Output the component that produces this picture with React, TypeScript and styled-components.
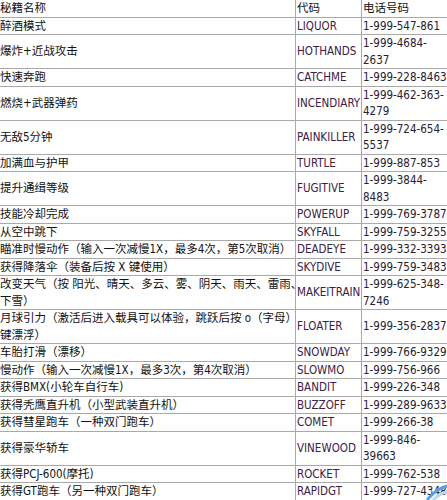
import React from 'react'
import styled, { createGlobalStyle } from 'styled-components'

const GlobalStyle = createGlobalStyle`
  html, body {
    margin: 0;
    padding: 0;
    background: #ffffff;
  }
`

const Page = styled.div`
  position: relative;
  width: 447px;
  height: 500px;
  overflow: hidden;
  background: #ffffff;
`

const Table = styled.table`
  margin-left: -2px;
  margin-top: -1px;
  border-collapse: collapse;
  table-layout: fixed;
  width: 470px;
  font-family: 'DejaVu Sans Condensed', 'DejaVu Sans', 'Noto Sans CJK SC', sans-serif;
  font-size: 11.5px;
  line-height: 16.5px;
`

const Cell = styled.td<{ $kind?: 'name' | 'code' | 'phone' }>`
  border: 1px solid #a9a9a9;
  padding: 0 1px;
  vertical-align: middle;
  white-space: nowrap;
  color: ${({ $kind }) => ($kind === 'code' ? '#3b2147' : $kind === 'phone' ? '#262130' : '#111111')};
`

const Swirl = styled.svg`
  position: absolute;
  right: 0;
  bottom: 0;
  width: 22px;
  height: 18px;
`

type Row = { name: string[]; code: string; phone: string[] }

const rows: Row[] = [
  { name: ['醉酒模式'], code: 'LIQUOR', phone: ['1-999-547-861'] },
  { name: ['爆炸+近战攻击'], code: 'HOTHANDS', phone: ['1-999-4684-', '2637'] },
  { name: ['快速奔跑'], code: 'CATCHME', phone: ['1-999-228-8463'] },
  { name: ['燃烧+武器弹药'], code: 'INCENDIARY', phone: ['1-999-462-363-', '4279'] },
  { name: ['无敌5分钟'], code: 'PAINKILLER', phone: ['1-999-724-654-', '5537'] },
  { name: ['加满血与护甲'], code: 'TURTLE', phone: ['1-999-887-853'] },
  { name: ['提升通缉等级'], code: 'FUGITIVE', phone: ['1-999-3844-', '8483'] },
  { name: ['技能冷却完成'], code: 'POWERUP', phone: ['1-999-769-3787'] },
  { name: ['从空中跳下'], code: 'SKYFALL', phone: ['1-999-759-3255'] },
  { name: ['瞄准时慢动作（输入一次减慢1X，最多4次，第5次取消）'], code: 'DEADEYE', phone: ['1-999-332-3393'] },
  { name: ['获得降落伞（装备后按 X 键使用）'], code: 'SKYDIVE', phone: ['1-999-759-3483'] },
  { name: ['改变天气（按 阳光、晴天、多云、雾、阴天、雨天、雷雨、', '下雪）'], code: 'MAKEITRAIN', phone: ['1-999-625-348-', '7246'] },
  { name: ['月球引力（激活后进入载具可以体验，跳跃后按 o（字母）', '键漂浮）'], code: 'FLOATER', phone: ['1-999-356-2837'] },
  { name: ['车胎打滑（漂移）'], code: 'SNOWDAY', phone: ['1-999-766-9329'] },
  { name: ['慢动作（输入一次减慢1X，最多3次，第4次取消）'], code: 'SLOWMO', phone: ['1-999-756-966'] },
  { name: ['获得BMX(小轮车自行车)'], code: 'BANDIT', phone: ['1-999-226-348'] },
  { name: ['获得秃鹰直升机（小型武装直升机）'], code: 'BUZZOFF', phone: ['1-999-289-9633'] },
  { name: ['获得彗星跑车（一种双门跑车）'], code: 'COMET', phone: ['1-999-266-38'] },
  { name: ['获得豪华轿车'], code: 'VINEWOOD', phone: ['1-999-846-', '39663'] },
  { name: ['获得PCJ-600(摩托)'], code: 'ROCKET', phone: ['1-999-762-538'] },
  { name: ['获得GT跑车（另一种双门跑车）'], code: 'RAPIDGT', phone: ['1-999-727-4348'] },
]

const Lines: React.FC<{ lines: string[] }> = ({ lines }) => (
  <>
    {lines.map((l, i) => (
      <React.Fragment key={i}>
        {i > 0 && <br />}
        {l}
      </React.Fragment>
    ))}
  </>
)

const App: React.FC = () => {
  return (
    <Page>
      <GlobalStyle />
      <Table>
        <colgroup>
          <col style={{ width: '297px' }} />
          <col style={{ width: '66px' }} />
          <col />
        </colgroup>
        <tbody>
          <tr>
            <Cell>秘籍名称</Cell>
            <Cell>代码</Cell>
            <Cell>电话号码</Cell>
          </tr>
          {rows.map((r) => (
            <tr key={r.code}>
              <Cell $kind="name">
                <Lines lines={r.name} />
              </Cell>
              <Cell $kind="code">{r.code}</Cell>
              <Cell $kind="phone">
                <Lines lines={r.phone} />
              </Cell>
            </tr>
          ))}
        </tbody>
      </Table>
      <Swirl viewBox="0 0 22 18">
        <path d="M2 18 C 8 11, 14 6, 22 4" stroke="#5aa0e0" strokeWidth="3" fill="none" />
        <path d="M8 18 C 12 14, 17 11, 22 10" stroke="#b9d8f4" strokeWidth="3" fill="none" />
      </Swirl>
    </Page>
  )
}

export default App
